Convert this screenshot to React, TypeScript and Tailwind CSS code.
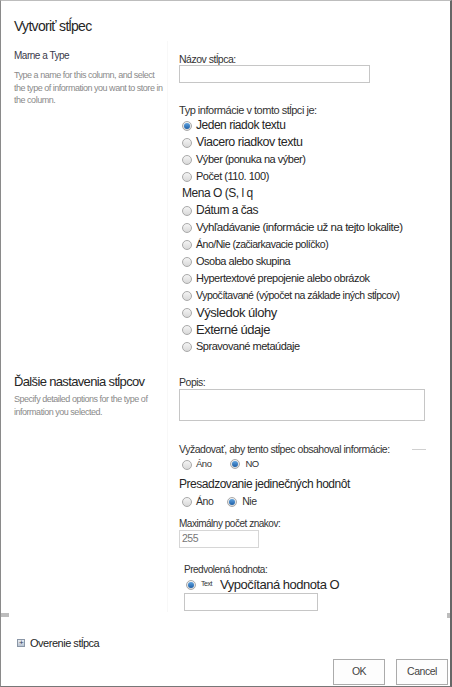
import React from 'react';

const font = { fontFamily: '"Liberation Sans", Arial, sans-serif' };

const Radio = ({ checked = false }: { checked?: boolean }) => (
  <span className="inline-flex w-[10px] h-[10px] shrink-0 items-center justify-center rounded-full border border-[#a9a9a9] bg-gradient-to-b from-[#f4f4f4] to-[#d9d9d9]">
    {checked && <span className="w-[6px] h-[6px] rounded-full bg-gradient-to-b from-[#5fa3e0] to-[#1d5fa6]" />}
  </span>
);

const typeOptions: { label: string; size: string; checked?: boolean; plain?: boolean }[] = [
  { label: 'Jeden riadok textu', size: 'text-[12px]', checked: true },
  { label: 'Viacero riadkov textu', size: 'text-[12.5px]' },
  { label: 'Výber (ponuka na výber)', size: 'text-[11px]' },
  { label: 'Počet (110. 100)', size: 'text-[11px]' },
  { label: 'Mena O (S, l q', size: 'text-[12px]', plain: true },
  { label: 'Dátum a čas', size: 'text-[12px]' },
  { label: 'Vyhľadávanie (informácie už na tejto lokalite)', size: 'text-[11.5px]' },
  { label: 'Áno/Nie (začiarkavacie políčko)', size: 'text-[10.5px]' },
  { label: 'Osoba alebo skupina', size: 'text-[11px]' },
  { label: 'Hypertextové prepojenie alebo obrázok', size: 'text-[11px]' },
  { label: 'Vypočítavané (výpočet na základe iných stĺpcov)', size: 'text-[10.5px]' },
  { label: 'Výsledok úlohy', size: 'text-[13px]' },
  { label: 'Externé údaje', size: 'text-[13px]' },
  { label: 'Spravované metaúdaje', size: 'text-[11px]' },
];

export default function App() {
  return (
    <div style={font} className="w-[452px] h-[687px] flex flex-col bg-white border-t border-t-[#bdbdbd] border-l border-l-[#8a8a8a] border-r-2 border-r-[#666] border-b border-b-[#777] text-[#222] tracking-[-0.03em] overflow-hidden">
      <h1 className="pl-[13px] pt-[16px] h-[40px] text-[14px] leading-[18px] text-[#262626] tracking-[-0.05em]">Vytvoriť stĺpec</h1>

      {/* section 1 */}
      <div className="flex h-[325px]">
        <div className="w-[167px] shrink-0 pl-[13px] pt-[8px] border-r border-r-[#f8f8f8]">
          <div className="text-[10px] leading-[14px] text-[#3a3a4a]">Marne a Type</div>
          <p className="mt-[6px] text-[9px] leading-[12.5px] text-[#8a8a8a] pr-[4px]">
            Type a name for this column, and select the type of information you want to store in the column.
          </p>
        </div>
        <div className="flex-1 pl-[11px] pt-[13px]">
          <div className="text-[10.5px] leading-[11px] text-[#333]">Názov stĺpca:</div>
          <div className="w-[191px] h-[18px] border border-[#c6c6c6] bg-white" />
          <div className="mt-[20px] text-[11px] leading-[14px] text-[#333]">Typ informácie v tomto stĺpci je:</div>
          <div className="flex flex-col">
            {typeOptions.map((o) => (
              <div key={o.label} className="h-[17px] flex items-center gap-[4px] pl-[3px]">
                {o.plain ? null : <Radio checked={o.checked} />}
                <span className={`${o.size} leading-[17px] text-[#262626] whitespace-nowrap`}>{o.label}</span>
              </div>
            ))}
          </div>
        </div>
      </div>

      {/* section 2 */}
      <div className="flex h-[246px]">
        <div className="w-[167px] shrink-0 pl-[13px] pt-[8px] border-r border-r-[#f8f8f8]">
          <div className="text-[13px] leading-[16px] text-[#262626] tracking-[-0.05em]">Ďalšie nastavenia stĺpcov</div>
          <p className="mt-[3px] text-[9px] leading-[13px] text-[#8a8a8a] pr-[4px]">
            Specify detailed options for the type of information you selected.
          </p>
        </div>
        <div className="flex-1 pl-[11px] pt-[9px]">
          <div className="text-[10.5px] leading-[14px] text-[#333]">Popis:</div>
          <div className="w-[246px] h-[32px] border border-[#c6c6c6] bg-white" />
          <div className="mt-[21px] flex items-center">
            <span className="text-[10.5px] leading-[14px] text-[#333] whitespace-nowrap">Vyžadovať, aby tento stĺpec obsahoval informácie:</span>
            <span className="ml-auto mr-[24px] w-[14px] h-px bg-[#d0d0d0]" />
          </div>
          <div className="mt-[1px] h-[15px] flex items-center pl-[3px] text-[9.5px] text-[#333]">
            <Radio />
            <span className="ml-[4px]">Áno</span>
            <span className="ml-[19px]"><Radio checked /></span>
            <span className="ml-[5px]">NO</span>
          </div>
          <div className="mt-[4px] text-[12px] leading-[16px] text-[#262626]">Presadzovanie jedinečných hodnôt</div>
          <div className="mt-[1px] h-[17px] flex items-center pl-[3px] text-[10.5px] text-[#333]">
            <Radio />
            <span className="ml-[4px]">Áno</span>
            <span className="ml-[14px]"><Radio checked /></span>
            <span className="ml-[5px]">Nie</span>
          </div>
          <div className="mt-[7px] text-[10px] leading-[13px] text-[#333]">Maximálny počet znakov:</div>
          <div className="w-[80px] h-[18px] border border-[#d6d6d6] bg-white flex items-center pl-[2px] text-[10.5px] text-[#777]">255</div>
          <div className="pl-[5px]">
            <div className="mt-[15px] text-[10px] leading-[14px] text-[#333]">Predvolená hodnota:</div>
            <div className="h-[15px] flex items-center pl-[2px]">
              <Radio checked />
              <span className="ml-[5px] text-[7px] text-[#333]">Text</span>
              <span className="ml-[8px] text-[13px] leading-[15px] text-[#262626]">Vypočítaná hodnota O</span>
            </div>
            <div className="mt-[1px] w-[134px] h-[18px] border border-[#c6c6c6] bg-white" />
          </div>
        </div>
      </div>

      {/* separator */}
      <div className="flex items-center h-[6px]">
        <span className="w-[8px] h-[4px] bg-[#bdbdbd]" />
        <span className="flex-1" />
        <span className="w-[3px] h-[5px] bg-[#bdbdbd]" />
      </div>

      {/* footer */}
      <div className="flex-1 flex flex-col">
        <div className="mt-[17px] flex items-center pl-[16px] h-[16px]">
          <span className="w-[8px] h-[8px] border border-[#8a96a6] bg-gradient-to-b from-[#e8edf3] to-[#b9c4d2] flex items-center justify-center text-[8px] leading-none text-[#33445a]">+</span>
          <span className="ml-[5px] text-[11px] text-[#1e1e1e]">Overenie stĺpca</span>
        </div>
        <div className="mt-auto mb-[1px] flex justify-end gap-[11px] pr-[2px]">
          <button className="w-[52px] h-[26px] border border-[#ababab] bg-[#fdfdfd] text-[10.5px] text-[#444]">OK</button>
          <button className="w-[52px] h-[26px] border border-[#ababab] bg-[#fdfdfd] text-[10.5px] text-[#444]">Cancel</button>
        </div>
      </div>
    </div>
  );
}
